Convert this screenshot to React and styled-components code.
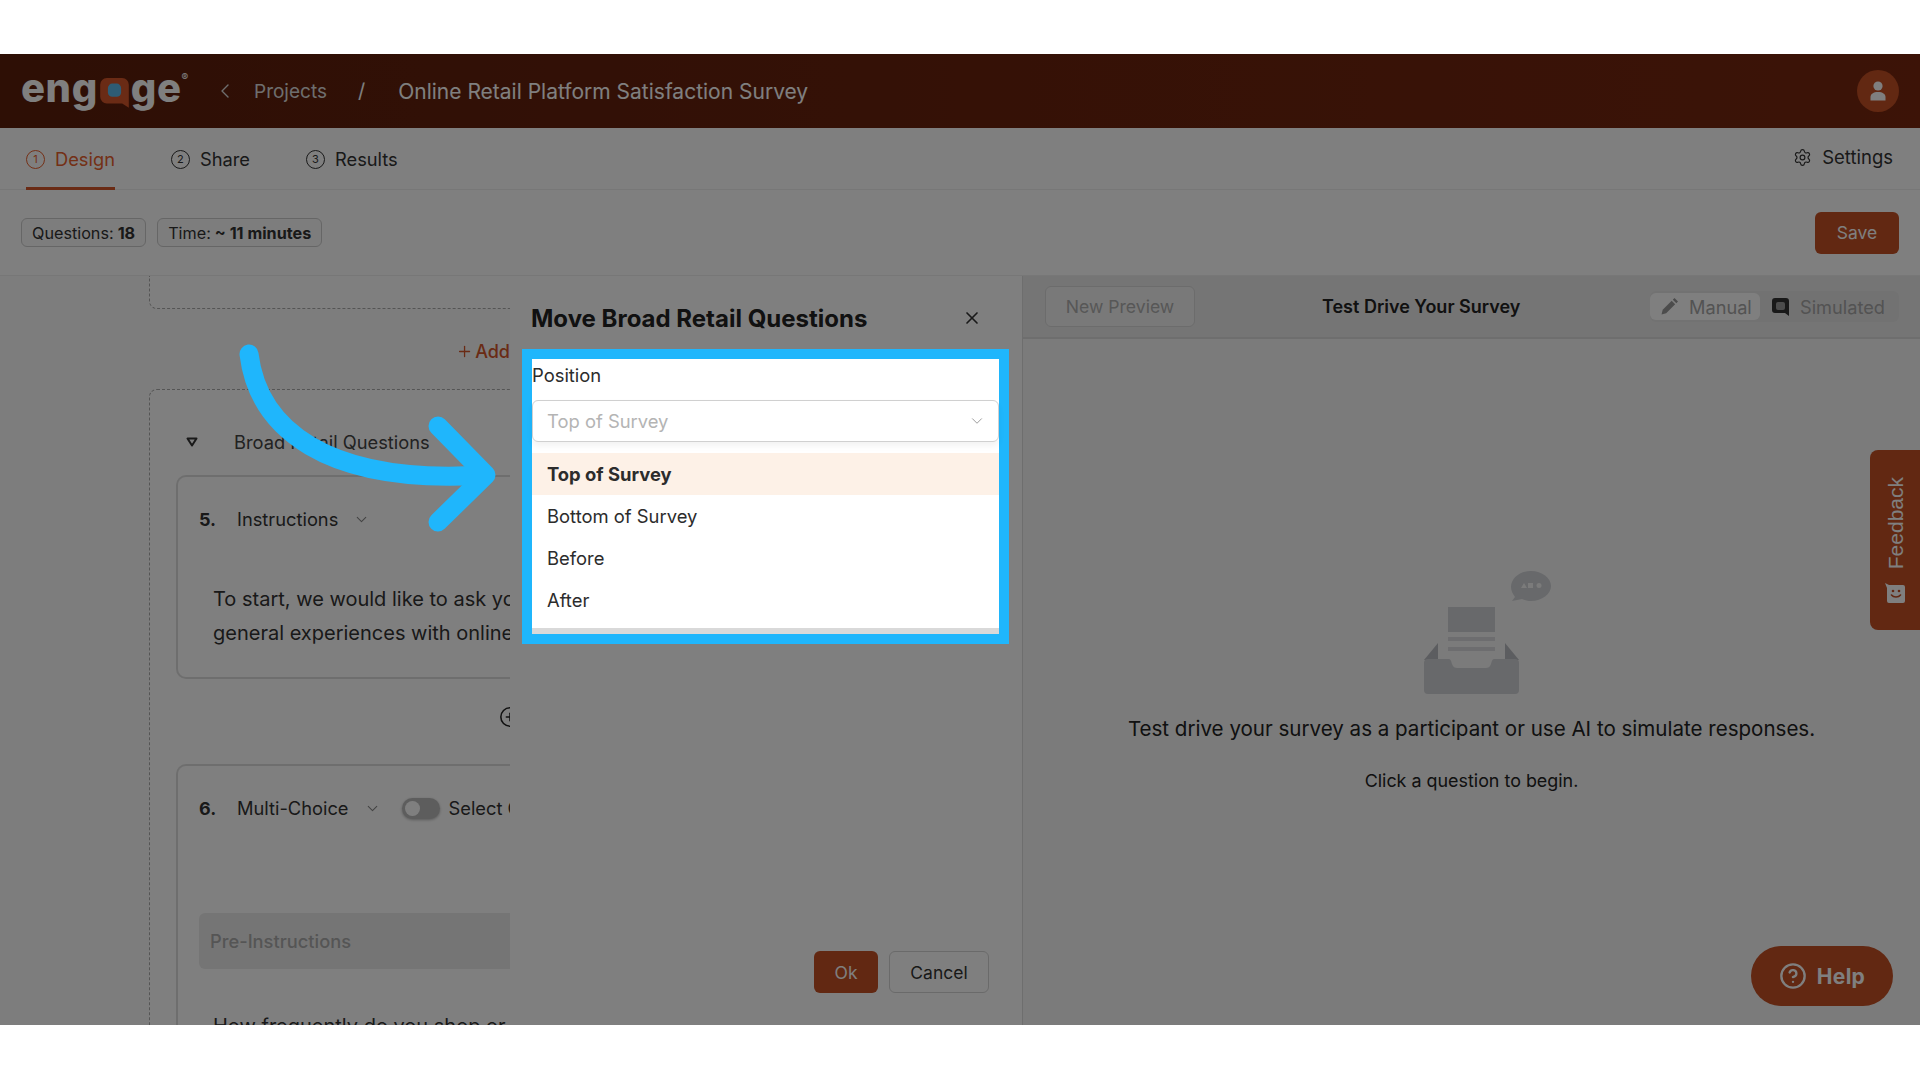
import React from "react";
import styled, { createGlobalStyle } from "styled-components";
import { ChevronDown, ChevronLeft, CirclePlus, CircleHelp, Plus, Settings, X } from "lucide-react";

const GlobalStyle = createGlobalStyle`
  html, body {
    margin: 0;
    background: #fff;
    font-family: Inter, Roboto, sans-serif;
    color: #2a2a2a;
  }
  * { box-sizing: border-box; }
`;

const Frame = styled.div`
  position: relative;
  margin-top: 54px;
  width: 1920px;
  height: 971px;
  overflow: hidden;
  display: flex;
  flex-direction: column;
  background: #fff;
`;

const Dim = styled.div`
  position: absolute;
  inset: 0;
  background: rgba(0, 0, 0, 0.5);
  z-index: 10;
`;

const Header = styled.header`
  height: 74px;
  flex: none;
  display: flex;
  align-items: center;
  padding: 0 21px;
  background: linear-gradient(90deg, #5c1e0b, #78270f);
  color: #fff;
`;

const Logo = styled.div`
  width: 180px;
  display: flex;
  align-items: center;
  font-weight: 800;
  font-size: 40px;
  letter-spacing: 0.6px;
  line-height: 1;
  color: #fff;
  padding-bottom: 6px;
`;

const Registered = styled.span`
  font-size: 10px;
  font-weight: 500;
  align-self: flex-start;
  margin-top: 5px;
`;

const Crumb = styled.span`
  font-size: ${(p) => (p.$strong ? "21px" : "19px")};
  color: ${(p) => (p.$strong ? "#fff" : "#ddd")};
`;

const Slash = styled.span`
  font-size: 20px;
  margin: 0 33px 0 31px;
`;

const Avatar = styled.div`
  width: 42px;
  height: 42px;
  margin-left: auto;
  border-radius: 50%;
  background: #c45024;
  display: flex;
  align-items: center;
  justify-content: center;
`;

const Tabs = styled.nav`
  height: 62px;
  flex: none;
  display: flex;
  padding: 0 26px;
  gap: 56px;
  border-bottom: 1px solid #eee;
`;

const Tab = styled.div`
  height: 62px;
  display: flex;
  align-items: center;
  gap: 10px;
  padding-top: 3px;
  font-size: 18.3px;
  color: ${(p) => (p.$active ? "#e8602d" : "#333")};
  border-bottom: 3px solid ${(p) => (p.$active ? "#d4562a" : "transparent")};
`;

const StepNo = styled.span`
  width: 19px;
  height: 19px;
  border-radius: 50%;
  border: 1.3px solid currentColor;
  display: flex;
  align-items: center;
  justify-content: center;
  font-size: 11px;
`;

const SettingsLink = styled.div`
  margin-left: auto;
  display: flex;
  align-items: center;
  gap: 10px;
  font-size: 18.5px;
  color: #333;
  padding-right: 1px;
  padding-bottom: 3px;
`;

const Toolbar = styled.div`
  height: 85px;
  flex: none;
  display: flex;
  align-items: center;
  gap: 11px;
  padding: 0 21px;
`;

const Chip = styled.div`
  height: 29px;
  padding: 0 10px;
  display: flex;
  align-items: center;
  gap: 4px;
  font-size: 16.2px;
  color: #333;
  background: #fafafa;
  border: 1px solid #ccc;
  border-radius: 6px;
  b { font-weight: 700; }
`;

const SaveButton = styled.button`
  margin-left: auto;
  width: 84px;
  height: 42px;
  font: inherit;
  font-size: 17.5px;
  color: #fff;
  background: #c45024;
  border: 0;
  border-radius: 6px;
`;

const Workspace = styled.div`
  flex: 1;
  display: flex;
  min-height: 0;
  border-top: 1px solid #eee;
`;

const LeftPane = styled.section`
  width: 510px;
  flex: none;
  padding-left: 149px;
  background: #fafafa;
  overflow: hidden;
`;

const StubCard = styled.div`
  height: 33px;
  width: 500px;
  background: #fff;
  border: 1.5px dashed #aaa;
  border-top: 0;
  border-radius: 0 0 0 8px;
`;

const AddRow = styled.div`
  height: 80px;
  display: flex;
  align-items: center;
  padding: 4px 0 0 307px;
  gap: 2px;
  font-size: 18px;
  font-weight: 500;
  color: #d4562a;
`;

const GroupCard = styled.div`
  width: 500px;
  padding: 34px 0 0 26px;
  background: #fff;
  border: 1.5px dashed #aaa;
  border-right: 0;
  border-radius: 8px 0 0 8px;
`;

const GroupTitle = styled.div`
  height: 37px;
  display: flex;
  align-items: center;
  gap: 36px;
  margin-bottom: 14px;
  margin-left: 10px;
  padding-bottom: 2px;
  font-size: 18.3px;
  color: #444;
`;

const TriangleMark = styled.svg`
  width: 12px;
  height: 10px;
  flex: none;
`;

const QuestionCard = styled.article`
  width: 480px;
  padding: 0 21px;
  border: 2px solid #ddd;
  border-right: 0;
  border-radius: 10px 0 0 10px;
  white-space: nowrap;
  ${(p) => p.$tall && "height: 420px;"}
`;

const QuestionHead = styled.div`
  height: 84px;
  display: flex;
  align-items: center;
  font-size: 18.3px;
  color: #333;
`;

const QuestionNo = styled.b`
  width: 38px;
  font-weight: 700;
  font-size: 18px;
`;

const TypeChevron = styled.span`
  display: flex;
  margin: 0 21px 0 15px;
  color: #888;
`;

const Toggle = styled.span`
  width: 38px;
  height: 21px;
  margin-right: 9px;
  border-radius: 11px;
  background: #bbb;
  padding: 3px;
  display: flex;
  box-shadow: 0 1px 3px rgba(0, 0, 0, 0.3);
  &::before {
    content: "";
    width: 15px;
    height: 15px;
    border-radius: 50%;
    background: #fff;
  }
`;

const Prompt = styled.p`
  margin: 0;
  padding: ${(p) => p.$padding || "0"};
  font-size: 20px;
  line-height: 34px;
  color: #333;
`;

const AddBetween = styled.div`
  height: 85px;
  display: flex;
  align-items: center;
  padding: 0 0 10px 323px;
  color: #222;
`;

const PreInstructions = styled.div`
  height: 56px;
  margin-top: 63px;
  width: 400px;
  padding-left: 11px;
  display: flex;
  align-items: center;
  border-radius: 6px;
  background: #ebebeb;
  font-size: 18.3px;
  font-weight: 500;
  color: #aaa;
`;

const Modal = styled.aside`
  width: 512px;
  flex: none;
  background: #fff;
  display: flex;
  flex-direction: column;
  padding: 0 13px 0 12px;
`;

const ModalHead = styled.div`
  height: 73px;
  flex: none;
  display: flex;
  align-items: center;
  justify-content: space-between;
  padding: 11px 27px 0 9px;
`;

const ModalTitle = styled.h2`
  margin: 0;
  font-size: 24px;
  font-weight: 700;
  color: #222;
`;

const Spotlight = styled.div`
  position: relative;
  z-index: 20;
  height: 295px;
  flex: none;
  border: 10px solid #1fb6fc;
  background: #fff;
  display: flex;
  flex-direction: column;
`;

const FieldLabel = styled.div`
  height: 41px;
  padding-bottom: 9px;
  display: flex;
  align-items: center;
  font-size: 18.4px;
  color: #2c2c2c;
`;

const SelectBox = styled.div`
  height: 42px;
  flex: none;
  display: flex;
  align-items: center;
  justify-content: space-between;
  padding: 0 12px 0 14px;
  border: 1px solid #d0d0d0;
  border-radius: 6px;
  font-size: 18.4px;
  color: #b4b4b4;
  box-shadow: 0 4px 6px rgba(0, 0, 0, 0.05);
`;

const OptionList = styled.ul`
  list-style: none;
  margin: 11px 0 0;
  padding: 0;
  flex: 1;
  border-bottom: 6px solid #d9d9d9;
`;

const Option = styled.li`
  height: 42px;
  padding-left: 15px;
  display: flex;
  align-items: center;
  font-size: 18.4px;
  font-weight: ${(p) => (p.$selected ? 700 : 400)};
  color: #2c2c2c;
  background: ${(p) => (p.$selected ? "#fdf1e7" : "#fff")};
`;

const ModalFoot = styled.div`
  margin-top: auto;
  display: flex;
  justify-content: flex-end;
  gap: 11px;
  padding: 0 20px 32px 0;
`;

const OkButton = styled.button`
  width: 64px;
  height: 42px;
  font: inherit;
  font-size: 17.5px;
  color: #fff;
  background: #c45024;
  border: 0;
  border-radius: 6px;
`;

const CancelButton = styled.button`
  width: 100px;
  height: 42px;
  font: inherit;
  font-size: 17.5px;
  color: #333;
  background: #fff;
  border: 1.5px solid #d4d4d4;
  border-radius: 6px;
`;

const RightPane = styled.section`
  flex: 1;
  display: flex;
  flex-direction: column;
  background: #f6f6f6;
  border-left: 1px solid #ddd;
`;

const PreviewBar = styled.div`
  height: 63px;
  flex: none;
  display: flex;
  align-items: center;
  padding: 0 21px 0 22px;
  background: #ebebeb;
  border-bottom: 2px solid #ddd;
`;

const GhostButton = styled.button`
  width: 150px;
  height: 41px;
  font: inherit;
  font-size: 17.6px;
  color: #aeaeae;
  background: #f3f3f3;
  border: 1.5px solid #d8d8d8;
  border-radius: 6px;
`;

const PreviewTitle = styled.div`
  margin-left: 127px;
  font-size: 18px;
  font-weight: 600;
  color: #222;
`;

const Segments = styled.div`
  margin-left: auto;
  width: 249px;
  height: 31px;
  padding: 2px 0;
  display: flex;
  align-items: center;
  border-radius: 6px;
  background: #e4e4e4;
`;

const Segment = styled.div`
  height: 27px;
  width: ${(p) => (p.$on ? "110px" : "139px")};
  padding-left: ${(p) => (p.$on ? "10px" : "11px")};
  display: flex;
  align-items: center;
  gap: 10px;
  border-radius: 6px;
  font-size: 18.2px;
  color: #a6a6a6;
  background: ${(p) => (p.$on ? "#fff" : "transparent")};
`;

const PreviewBody = styled.div`
  position: relative;
  flex: 1;
  display: flex;
  flex-direction: column;
  align-items: center;
  padding: 232px 0 0 0;
`;

const Illustration = styled.svg`
  width: 140px;
  height: 125px;
  margin-left: 43px;
`;

const Lead = styled.p`
  margin: 18px 0 0;
  font-size: 20.55px;
  line-height: 30px;
  color: #222;
`;

const Sub = styled.p`
  margin: 22px 0 0;
  font-size: 17.9px;
  line-height: 30px;
  color: #222;
`;

const FeedbackTab = styled.div`
  position: absolute;
  right: 0;
  top: 111px;
  width: 50px;
  height: 180px;
  border-radius: 8px 0 0 8px;
  background: #c45024;
  display: flex;
  flex-direction: column-reverse;
  align-items: center;
  gap: 14px;
  padding: 27px 0 27px 0;
  color: #fff;
`;

const FeedbackLabel = styled.span`
  writing-mode: vertical-rl;
  transform: rotate(180deg);
  font-family: "Liberation Sans", sans-serif;
  font-size: 21px;
  line-height: 1;
`;

const SmileMark = styled.svg`
  width: 22px;
  height: 20px;
  flex: none;
`;

const HelpPill = styled.div`
  position: absolute;
  right: 27px;
  bottom: 19px;
  width: 142px;
  height: 60px;
  border-radius: 30px;
  background: #c45024;
  display: flex;
  align-items: center;
  justify-content: center;
  gap: 10px;
  font-size: 21px;
  font-weight: 700;
  letter-spacing: 0.3px;
  color: #fff;
`;

const ArrowMark = styled.svg`
  position: absolute;
  left: 0;
  top: 0;
  z-index: 20;
  pointer-events: none;
`;

const BubbleMark = styled.svg`
  width: 31px;
  height: 33px;
  flex: none;
  margin: 10px 1px 0 1px;
`;

const EngageBubble = () => (
  <BubbleMark viewBox="0 0 28 30">
    <path d="M7 1h14a6 6 0 0 1 6 6v21l-6-4H7a6 6 0 0 1-6-6V7a6 6 0 0 1 6-6z" fill="#d4562a" />
    <rect x="8" y="6" width="12" height="12" rx="4" fill="#5cb8e8" />
  </BubbleMark>
);

const PersonIcon = () => (
  <svg width="18" height="22" viewBox="0 0 18 22" fill="#fff">
    <circle cx="9" cy="6" r="4.6" />
    <path d="M1.5 20.500v-3.500c0-3 3-5 7.500-5s7.500 2 7.500 5v3.500z" />
  </svg>
);

const PencilIcon = () => (
  <svg width="19" height="19" viewBox="0 0 19 19" fill="#999">
    <path d="M14.500 1l3.500 3.500-1.700 1.700-3.500-3.500z" />
    <path d="M11.700 3.800l3.500 3.500-9 9-4.700 1.200 1.200-4.700z" />
  </svg>
);

const BubbleIcon = () => (
  <svg width="19" height="20" viewBox="0 0 19 20">
    <path d="M4 1h11a3 3 0 0 1 3 3v15l-4-3H4a3 3 0 0 1-3-3V4a3 3 0 0 1 3-3z" fill="#333" />
    <rect x="5" y="5" width="9" height="8" rx="2" fill="#999" />
  </svg>
);

const SmileIcon = () => (
  <SmileMark viewBox="0 0 22 20">
    <path d="M1 0l4 2h14a2 2 0 0 1 2 2v14a2 2 0 0 1-2 2H5a2 2 0 0 1-2-2V5z" fill="#fff" />
    <circle cx="9" cy="8" r="1.300" fill="#c45024" />
    <circle cx="15" cy="8" r="1.300" fill="#c45024" />
    <path d="M7.500 12c2 2.600 7 2.600 9 0" fill="none" stroke="#c45024" strokeWidth="1.600" strokeLinecap="round" />
  </SmileMark>
);

const GroupTriangle = () => (
  <TriangleMark viewBox="0 0 12 10">
    <path d="M1.500 1.500h9L6 8.500z" fill="none" stroke="#333" strokeWidth="2" strokeLinejoin="round" />
  </TriangleMark>
);

const TrayDrawing = () => (
  <Illustration viewBox="0 0 140 125">
    <g fill="#d0d2d6">
      <rect x="25" y="36" width="47" height="25" />
      <rect x="25" y="66" width="47" height="4" fill="#dadbde" />
      <rect x="25" y="76" width="47" height="4" fill="#dadbde" />
      <path d="M15 72v17H1z" fill="#b9bbc0" />
      <path d="M82 72v17h14z" fill="#b9bbc0" />
      <path d="M5 88h20c3 0 3 2 4 5 1 3 3 4 5 4h29c2 0 4-1 5-4 1-3 1-5 4-5h20a4 4 0 0 1 4 4v27a4 4 0 0 1-4 4H5a4 4 0 0 1-4-4V92a4 4 0 0 1 4-4z" />
      <path d="M108 0c-11 0-20 7-20 16 0 4 2 7 4 10l-3 4 10-2c3 1 6 2 9 2 11 0 20-7 20-15S119 0 108 0z" />
    </g>
    <g fill="#f6f6f6">
      <path d="M98 17l3-5 3 5z" />
      <rect x="105" y="12" width="5" height="5" />
      <circle cx="116" cy="14.500" r="2.500" />
    </g>
  </Illustration>
);

const BlueArrow = () => (
  <ArrowMark width="1920" height="971" viewBox="0 54 1920 971" fill="none" stroke="#1fb6fc" strokeLinecap="round" strokeLinejoin="round">
    <path d="M249 354C258 428 325 485 484 475" strokeWidth="19" />
    <path d="M438 426L486 475L438 522" strokeWidth="19" />
  </ArrowMark>
);

export default function App() {
  return (
    <Frame>
      <GlobalStyle />
      <Header>
        <Logo>
          eng
          <EngageBubble />
          ge
          <Registered>®</Registered>
        </Logo>
        <ChevronLeft size={24} strokeWidth={1.4} color="#ddd" style={{ marginLeft: 12, marginRight: 17 }} />
        <Crumb>Projects</Crumb>
        <Slash>/</Slash>
        <Crumb $strong>Online Retail Platform Satisfaction Survey</Crumb>
        <Avatar>
          <PersonIcon />
        </Avatar>
      </Header>

      <Tabs>
        <Tab $active>
          <StepNo>1</StepNo>
          Design
        </Tab>
        <Tab>
          <StepNo>2</StepNo>
          Share
        </Tab>
        <Tab>
          <StepNo>3</StepNo>
          Results
        </Tab>
        <SettingsLink>
          <Settings size={19} strokeWidth={1.5} />
          Settings
        </SettingsLink>
      </Tabs>

      <Toolbar>
        <Chip>
          Questions: <b>18</b>
        </Chip>
        <Chip>
          Time: <b>~ 11 minutes</b>
        </Chip>
        <SaveButton>Save</SaveButton>
      </Toolbar>

      <Workspace>
        <LeftPane>
          <StubCard />
          <AddRow>
            <Plus size={19} strokeWidth={1.8} />
            Add
          </AddRow>
          <GroupCard>
            <GroupTitle>
              <GroupTriangle />
              Broad Retail Questions
            </GroupTitle>
            <QuestionCard>
              <QuestionHead>
                <QuestionNo>5.</QuestionNo>
                Instructions
                <TypeChevron>
                  <ChevronDown size={17} strokeWidth={1.5} />
                </TypeChevron>
              </QuestionHead>
              <Prompt $padding="21px 0 27px 14px">
                To start, we would like to ask you
                <br />
                general experiences with online
              </Prompt>
            </QuestionCard>
            <AddBetween>
              <CirclePlus size={22} strokeWidth={1.7} />
            </AddBetween>
            <QuestionCard $tall>
              <QuestionHead>
                <QuestionNo>6.</QuestionNo>
                Multi-Choice
                <TypeChevron>
                  <ChevronDown size={17} strokeWidth={1.5} />
                </TypeChevron>
                <Toggle />
                Select One
              </QuestionHead>
              <PreInstructions>Pre-Instructions</PreInstructions>
              <Prompt $padding="40px 0 0 14px">How frequently do you shop or</Prompt>
            </QuestionCard>
          </GroupCard>
        </LeftPane>

        <Modal>
          <ModalHead>
            <ModalTitle>Move Broad Retail Questions</ModalTitle>
            <X size={20} strokeWidth={2} color="#333" />
          </ModalHead>
          <Spotlight>
            <FieldLabel>Position</FieldLabel>
            <SelectBox>
              Top of Survey
              <ChevronDown size={18} strokeWidth={1.3} color="#999" />
            </SelectBox>
            <OptionList>
              <Option $selected>Top of Survey</Option>
              <Option>Bottom of Survey</Option>
              <Option>Before</Option>
              <Option>After</Option>
            </OptionList>
          </Spotlight>
          <ModalFoot>
            <OkButton>Ok</OkButton>
            <CancelButton>Cancel</CancelButton>
          </ModalFoot>
        </Modal>

        <RightPane>
          <PreviewBar>
            <GhostButton>New Preview</GhostButton>
            <PreviewTitle>Test Drive Your Survey</PreviewTitle>
            <Segments>
              <Segment $on>
                <PencilIcon />
                Manual
              </Segment>
              <Segment>
                <BubbleIcon />
                Simulated
              </Segment>
            </Segments>
          </PreviewBar>
          <PreviewBody>
            <TrayDrawing />
            <Lead>Test drive your survey as a participant or use AI to simulate responses.</Lead>
            <Sub>Click a question to begin.</Sub>
            <FeedbackTab>
              <SmileIcon />
              <FeedbackLabel>Feedback</FeedbackLabel>
            </FeedbackTab>
            <HelpPill>
              <CircleHelp size={28} strokeWidth={2} />
              Help
            </HelpPill>
          </PreviewBody>
        </RightPane>
      </Workspace>
      <Dim />
      <BlueArrow />
    </Frame>
  );
}
